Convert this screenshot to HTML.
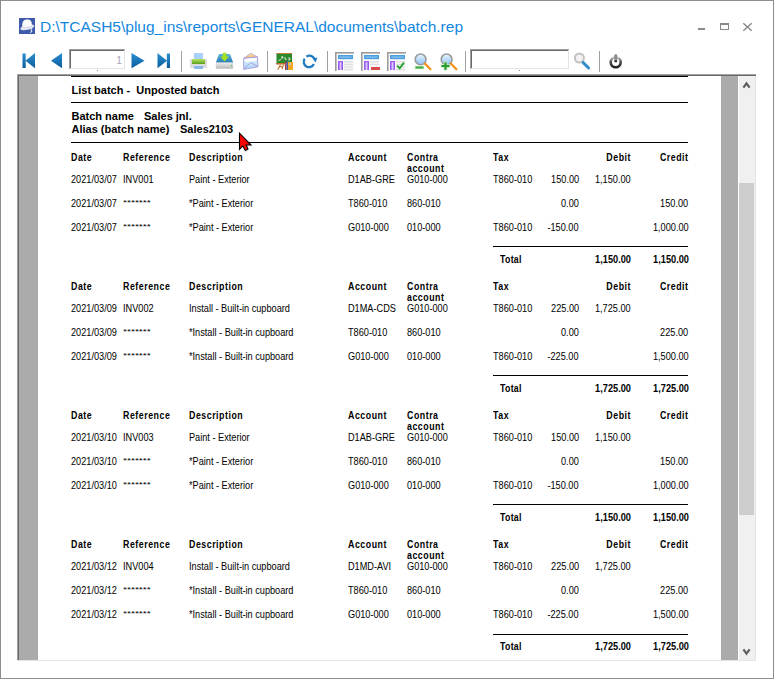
<!DOCTYPE html>
<html><head><meta charset="utf-8">
<style>
html,body{margin:0;padding:0;}
body{width:774px;height:679px;position:relative;overflow:hidden;background:#fff;font-family:"Liberation Sans",sans-serif;}
.t{position:absolute;white-space:pre;}
.hl{position:absolute;background:#000;}
.abs{position:absolute;}
</style></head><body>
<div class="abs" style="left:0;top:0;width:772px;height:677px;border:1px solid #8e8e8e;"></div>
<!-- title icon -->
<svg class="abs" style="left:19px;top:18px" width="16" height="16" viewBox="0 0 16 16">
<rect x="0" y="0" width="16" height="16" fill="#3d5aab"/>
<ellipse cx="8.3" cy="9.4" rx="7.2" ry="2.5" transform="rotate(-13 8.3 9.4)" fill="#e6e8f2"/>
<path d="M3.2 8.6 C3 3.2 5 1.4 8.2 1.4 C11.6 1.4 13 3.2 12.9 7.6 C10 9 6 9.4 3.2 8.6 Z" fill="#fbfbfd"/>
<path d="M4 9.6 C7 10.2 11 9.6 14.5 7.8" fill="none" stroke="#c9cde0" stroke-width="0.6"/>
<path d="M13.2 10.3 C12.2 10.5 11.6 11.3 12.3 12 C13 12.6 13.2 13.4 11.2 14.6" fill="none" stroke="#dfe3f0" stroke-width="1.1"/>
</svg>
<div class="t" style="left:40px;top:17.5px;font-size:15.5px;line-height:18px;color:#1387de;">D:\TCASH5\plug_ins\reports\GENERAL\documents\batch.rep</div>
<!-- window controls -->
<div class="abs" style="left:698px;top:28px;width:7px;height:2px;background:#8a8a8a"></div>
<div class="abs" style="left:720px;top:23px;width:7px;height:4px;border:1px solid #8a8a8a;border-top-width:2px"></div>
<svg class="abs" style="left:742px;top:22px" width="11" height="10" viewBox="0 0 11 10"><path d="M1.3 1.3 L9.7 8.7 M9.7 1.3 L1.3 8.7" stroke="#8a8a8a" stroke-width="1.5"/></svg>
<!-- toolbar -->
<svg class="abs" style="left:0;top:44px" width="774" height="30" viewBox="0 44 774 30">
<defs>
<linearGradient id="nb" x1="0" y1="0" x2="0" y2="1"><stop offset="0" stop-color="#2a8fd0"/><stop offset="1" stop-color="#0a5c9c"/></linearGradient>
<linearGradient id="gr" x1="0" y1="0" x2="0" y2="1"><stop offset="0" stop-color="#b8e860"/><stop offset="1" stop-color="#5a9e1a"/></linearGradient>
<linearGradient id="lens" x1="0" y1="0" x2="0" y2="1"><stop offset="0" stop-color="#e8f4ff"/><stop offset="1" stop-color="#8ec2f0"/></linearGradient>
</defs>
<!-- first -->
<path d="M22.5 53.5 h3.2 v14.5 h-3.2z" fill="url(#nb)"/>
<path d="M25.5 60.7 L35 53 V68.3 Z" fill="url(#nb)"/>
<!-- prev -->
<path d="M51 60.7 L62 53 V68.3 Z" fill="url(#nb)"/>
<!-- next -->
<path d="M144.5 60.7 L131.5 53 V68.3 Z" fill="url(#nb)"/>
<!-- last -->
<path d="M167 60.7 L157.5 53 V68.3 Z" fill="url(#nb)"/>
<path d="M166.8 53.5 h3.2 v14.5 h-3.2z" fill="url(#nb)"/>
<!-- separators -->
<rect x="181" y="51" width="1" height="21" fill="#a0a0a0"/>
<rect x="267" y="51" width="1" height="21" fill="#a0a0a0"/>
<rect x="327" y="51" width="1" height="21" fill="#a0a0a0"/>
<rect x="465" y="51" width="1" height="21" fill="#a0a0a0"/>
<rect x="599" y="51" width="1" height="21" fill="#a0a0a0"/>
<!-- printer -->
<rect x="190" y="59" width="17" height="9" rx="1" fill="#dcdcdc"/>
<rect x="194" y="53" width="9" height="7" fill="#a8d0f8"/>
<rect x="192" y="59" width="13" height="5" fill="url(#gr)"/>
<rect x="194" y="66" width="9" height="3" fill="#8ab8ea"/>
<!-- tray -->
<linearGradient id="trb" x1="0" y1="0" x2="0" y2="1"><stop offset="0" stop-color="#5ab4e0"/><stop offset="1" stop-color="#2a7aae"/></linearGradient>
<linearGradient id="trg" x1="0" y1="0" x2="0" y2="1"><stop offset="0" stop-color="#ececec"/><stop offset="1" stop-color="#b8b8b8"/></linearGradient>
<path d="M219.5 54 H229 Q230 54 230.4 55 L233.2 62.8 H215.8 L218.6 55 Q219 54 219.5 54 Z" fill="url(#trb)"/>
<rect x="215.8" y="62.6" width="17.4" height="6.2" rx="1" fill="url(#trg)"/>
<rect x="231" y="65" width="1" height="1" fill="#40c040"/>
<path d="M222.8 52.8 h3.6 v3.8 h2.6 l-4.4 4.8 l-4.4 -4.8 h2.6z" fill="#a4e21c"/>
<!-- envelope -->
<linearGradient id="evb" x1="0" y1="0" x2="0" y2="1"><stop offset="0" stop-color="#e8f6ff"/><stop offset="1" stop-color="#a8d4f4"/></linearGradient>
<linearGradient id="evy" x1="0" y1="0" x2="0" y2="1"><stop offset="0" stop-color="#fbe9a8"/><stop offset="1" stop-color="#f0b060"/></linearGradient>
<path d="M243.5 58.5 L250.8 53.3 L257.5 57 Z" fill="url(#evy)" stroke="#b0a0e0" stroke-width="0.8"/>
<path d="M243.5 58.5 L257.5 57 L258 66.8 L243.8 69.4 Z" fill="url(#evb)" stroke="#a898e0" stroke-width="0.9"/>
<path d="M244.5 59 L256.8 57.8 L256.4 60.8 L245.2 62.2 Z" fill="#ffffff"/>
<path d="M243.8 69.2 L250.6 62.6 L257.8 66.6" fill="none" stroke="#a898e0" stroke-width="0.9"/>
<!-- chalkboard -->
<rect x="276.5" y="53" width="15.5" height="10" fill="#2c8a2e"/>
<rect x="276.5" y="53" width="15.5" height="0.9" fill="#d08030"/>
<path d="M278.5 60.5 l2.5 -1 M281.8 58.8 v-2.2 h1 v1.8 M285 57.2 v2 h1.6 M288.3 58 h1.5 v2 h-1.5" fill="none" stroke="#f0f0f0" stroke-width="0.9"/>
<rect x="276" y="63" width="10" height="1.5" fill="#b8702a"/>
<path d="M280.5 64.5 L277.8 69.8 M279 66.8 H283.5 M283.5 64.5 L282 69" stroke="#b8702a" stroke-width="1.1"/>
<rect x="285" y="61.5" width="1.6" height="8.5" fill="#a03840"/>
<rect x="286.6" y="61" width="1.4" height="9" fill="#4060a8"/>
<rect x="288" y="62" width="5" height="8" fill="#f2a820"/>
<rect x="289" y="63" width="2" height="2" fill="#b0c8e0"/>
<!-- refresh -->
<path d="M304.70 58.76 A5.3 5.3 0 1 0 313.84 64.04" fill="none" stroke="#1e7cc0" stroke-width="2.3"/>
<path d="M306.46 56.66 A5.3 5.3 0 0 1 314.48 59.19" fill="none" stroke="#1e7cc0" stroke-width="2.3"/>
<path d="M312.5 58.6 L317.4 57.6 L315.6 62.4 Z" fill="#1e7cc0"/>
<!-- page icons -->
<rect x="335" y="52" width="19" height="19" fill="#fcfcfc"/>
<rect x="335" y="52" width="19" height="1.6" fill="#9c9c9c"/>
<rect x="335" y="52" width="1.6" height="19" fill="#9c9c9c"/>
<rect x="338" y="55" width="15" height="4.2" fill="#4a9fdc"/>
<rect x="339.5" y="56.5" width="12" height="1.2" fill="#90c4ee"/>
<rect x="338" y="61" width="5" height="9" fill="#9a5cf0"/>
<rect x="339.6" y="62.2" width="1.8" height="7.8" fill="#dccaff"/>
<rect x="344" y="61" width="9" height="1.6" fill="#e0e0e0"/>
<rect x="344" y="63.6" width="9" height="1.6" fill="#e0e0e0"/>
<rect x="344" y="66.2" width="9" height="1.6" fill="#e0e0e0"/>
<rect x="344" y="68.8" width="9" height="1.6" fill="#e0e0e0"/>
<rect x="361" y="52" width="19" height="19" fill="#fcfcfc"/>
<rect x="361" y="52" width="19" height="1.6" fill="#9c9c9c"/>
<rect x="361" y="52" width="1.6" height="19" fill="#9c9c9c"/>
<rect x="364" y="55" width="15" height="4.2" fill="#4a9fdc"/>
<rect x="365.5" y="56.5" width="12" height="1.2" fill="#90c4ee"/>
<rect x="364" y="61" width="5" height="9" fill="#9a5cf0"/>
<rect x="365.6" y="62.2" width="1.8" height="7.8" fill="#dccaff"/>
<rect x="370" y="61" width="9" height="1.6" fill="#e0e0e0"/>
<rect x="370" y="63.6" width="9" height="1.6" fill="#e0e0e0"/>
<rect x="371" y="67" width="9" height="3" fill="#d84a4a"/>
<rect x="387" y="52" width="19" height="19" fill="#fcfcfc"/>
<rect x="387" y="52" width="19" height="1.6" fill="#9c9c9c"/>
<rect x="387" y="52" width="1.6" height="19" fill="#9c9c9c"/>
<rect x="390" y="55" width="15" height="4.2" fill="#4a9fdc"/>
<rect x="391.5" y="56.5" width="12" height="1.2" fill="#90c4ee"/>
<rect x="390" y="61" width="5" height="9" fill="#9a5cf0"/>
<rect x="391.6" y="62.2" width="1.8" height="7.8" fill="#dccaff"/>
<rect x="396" y="61" width="9" height="1.6" fill="#e0e0e0"/>
<rect x="396" y="63.6" width="9" height="1.6" fill="#e0e0e0"/>
<rect x="396" y="66.2" width="9" height="1.6" fill="#e0e0e0"/>
<rect x="396" y="68.8" width="9" height="1.6" fill="#e0e0e0"/>
<path d="M397.2 65.6 L399.6 68.4 L404 62.6" fill="none" stroke="#22a030" stroke-width="1.8"/>
<!-- zoom out -->
<circle cx="420.6" cy="59.4" r="5.4" fill="url(#lens)" stroke="#9a9a9a" stroke-width="1.6"/>
<path d="M425 63.8 L430.4 69.3" stroke="#f0901a" stroke-width="2.3" stroke-linecap="round"/>
<rect x="414.8" y="65.8" width="9.4" height="3.4" fill="#c8ecc8"/>
<rect x="415.5" y="66.5" width="8" height="2" fill="#3ca83c"/>
<!-- zoom in -->
<circle cx="446.6" cy="59.4" r="5.4" fill="url(#lens)" stroke="#9a9a9a" stroke-width="1.6"/>
<path d="M451 63.8 L456.4 69.3" stroke="#f0901a" stroke-width="2.3" stroke-linecap="round"/>
<path d="M440.8 66 h9.4 M445.5 61.6 v8.8" stroke="#c8ecc8" stroke-width="3.6"/>
<path d="M441.5 66 h8 M445.5 62.3 v7.4" stroke="#2a9a2a" stroke-width="2.2"/>
<!-- search boxes -->
<rect x="69" y="49" width="57" height="21" fill="#fff"/>
<rect x="69" y="49" width="56" height="1" fill="#a0a0a0"/><rect x="69" y="49" width="1" height="20" fill="#a0a0a0"/>
<rect x="70" y="50" width="54" height="1" fill="#696969"/><rect x="70" y="50" width="1" height="18" fill="#696969"/>
<rect x="70" y="68" width="55" height="1" fill="#e3e3e3"/><rect x="124" y="50" width="1" height="19" fill="#e3e3e3"/>
<rect x="470" y="49" width="100" height="21" fill="#fff"/>
<rect x="470" y="49" width="99" height="1" fill="#a0a0a0"/><rect x="470" y="49" width="1" height="20" fill="#a0a0a0"/>
<rect x="471" y="50" width="97" height="1" fill="#696969"/><rect x="471" y="50" width="1" height="18" fill="#696969"/>
<rect x="471" y="68" width="98" height="1" fill="#e3e3e3"/><rect x="568" y="50" width="1" height="19" fill="#e3e3e3"/>
<rect x="97" y="70" width="1" height="1" fill="#808080"/>
<rect x="519" y="70" width="1" height="1" fill="#808080"/>
<!-- find -->
<circle cx="579.4" cy="58" r="4.5" fill="#f2f2f2" stroke="#c2c2c2" stroke-width="2"/>
<path d="M583.2 62.6 L588.6 68" stroke="#2f8ec8" stroke-width="3" stroke-linecap="round"/>
<!-- power -->
<linearGradient id="pw" x1="0" y1="0" x2="0" y2="1"><stop offset="0" stop-color="#c8c8c8"/><stop offset="0.45" stop-color="#505050"/><stop offset="1" stop-color="#202020"/></linearGradient>
<circle cx="615.7" cy="62.3" r="5" fill="none" stroke="url(#pw)" stroke-width="2.6"/>
<rect x="614.3" y="54.2" width="2.9" height="8" rx="1.2" fill="#8a8a8a"/>
<rect x="614.5" y="60.5" width="2.5" height="1.6" fill="#202020"/>
</svg>
<div class="t" style="right:652px;top:53.5px;font-size:10.5px;line-height:12px;color:#a8a8b8;">1</div>

<div class="abs" style="left:17px;top:74px;width:739px;height:587px;background:#fff;overflow:hidden;">
  <div class="abs" style="left:0;top:0;width:739px;height:1px;background:#a0a0a0"></div>
  <div class="abs" style="left:1px;top:1px;width:738px;height:1px;background:#696969"></div>
  <div class="abs" style="left:0;top:0;width:1px;height:587px;background:#a0a0a0"></div>
  <div class="abs" style="left:1px;top:1px;width:1px;height:586px;background:#696969"></div>
  <div class="abs" style="left:2px;top:2px;width:19px;height:584px;background:#ababab"></div>
  <div class="abs" style="left:704px;top:2px;width:17px;height:584px;background:#ababab"></div>
  <div class="abs" style="left:0;top:586px;width:739px;height:1px;background:#e3e3e3"></div>
</div>
<div class="abs" style="left:0;top:0;width:774px;height:679px;">
<div class="hl" style="left:71px;top:76px;width:617px;height:1px"></div><div class="t" style="left:71.5px;top:84.68px;font-size:11px;line-height:11px;font-weight:bold;color:#000;">List batch -  Unposted batch</div>
<div class="hl" style="left:71px;top:102px;width:617px;height:1px"></div><div class="t" style="left:71.5px;top:110.68px;font-size:11px;line-height:11px;font-weight:bold;color:#000;">Batch name</div>
<div class="t" style="left:144px;top:110.68px;font-size:11px;line-height:11px;font-weight:bold;color:#000;">Sales jnl.</div>
<div class="t" style="left:71.5px;top:123.68px;font-size:11px;line-height:11px;font-weight:bold;color:#000;">Alias (batch name)</div>
<div class="t" style="left:180px;top:123.68px;font-size:11px;line-height:11px;font-weight:bold;color:#000;">Sales2103</div>
<div class="hl" style="left:71px;top:142px;width:617px;height:1px"></div><div class="t" style="left:71px;top:153.03px;font-size:10px;line-height:10px;font-weight:bold;color:#000;letter-spacing:0.6px;transform:scale(0.88,1.0);transform-origin:left 6.97px;">Date</div>
<div class="t" style="left:123px;top:153.03px;font-size:10px;line-height:10px;font-weight:bold;color:#000;letter-spacing:0.6px;transform:scale(0.88,1.0);transform-origin:left 6.97px;">Reference</div>
<div class="t" style="left:188.5px;top:153.03px;font-size:10px;line-height:10px;font-weight:bold;color:#000;letter-spacing:0.6px;transform:scale(0.88,1.0);transform-origin:left 6.97px;">Description</div>
<div class="t" style="left:347.5px;top:153.03px;font-size:10px;line-height:10px;font-weight:bold;color:#000;letter-spacing:0.6px;transform:scale(0.88,1.0);transform-origin:left 6.97px;">Account</div>
<div class="t" style="left:406.5px;top:153.03px;font-size:10px;line-height:10px;font-weight:bold;color:#000;letter-spacing:0.6px;transform:scale(0.88,1.0);transform-origin:left 6.97px;">Contra</div>
<div class="t" style="left:406.5px;top:163.53px;font-size:10px;line-height:10px;font-weight:bold;color:#000;letter-spacing:0.6px;transform:scale(0.88,1.0);transform-origin:left 6.97px;">account</div>
<div class="t" style="left:492.5px;top:153.03px;font-size:10px;line-height:10px;font-weight:bold;color:#000;letter-spacing:0.6px;transform:scale(0.88,1.0);transform-origin:left 6.97px;">Tax</div>
<div class="t" style="right:143px;top:153.03px;font-size:10px;line-height:10px;font-weight:bold;color:#000;letter-spacing:0.6px;transform:scale(0.88,1.0);transform-origin:right 6.97px;">Debit</div>
<div class="t" style="right:85.5px;top:153.03px;font-size:10px;line-height:10px;font-weight:bold;color:#000;letter-spacing:0.6px;transform:scale(0.88,1.0);transform-origin:right 6.97px;">Credit</div>
<div class="t" style="left:71px;top:175.36px;font-size:10.2px;line-height:10.2px;color:#000;transform:scale(0.9,1.0);transform-origin:left 7.64px;">2021/03/07</div>
<div class="t" style="left:123px;top:175.36px;font-size:10.2px;line-height:10.2px;color:#000;transform:scale(0.9,1.0);transform-origin:left 7.64px;">INV001</div>
<div class="t" style="left:188.5px;top:175.36px;font-size:10.2px;line-height:10.2px;color:#000;transform:scale(0.9,1.0);transform-origin:left 7.64px;">Paint - Exterior</div>
<div class="t" style="left:347.5px;top:175.36px;font-size:10.2px;line-height:10.2px;color:#000;transform:scale(0.9,1.0);transform-origin:left 7.64px;">D1AB-GRE</div>
<div class="t" style="left:406.5px;top:175.36px;font-size:10.2px;line-height:10.2px;color:#000;transform:scale(0.9,1.0);transform-origin:left 7.64px;">G010-000</div>
<div class="t" style="left:492.5px;top:175.36px;font-size:10.2px;line-height:10.2px;color:#000;transform:scale(0.9,1.0);transform-origin:left 7.64px;">T860-010</div>
<div class="t" style="right:195px;top:175.36px;font-size:10.2px;line-height:10.2px;color:#000;transform:scale(0.9,1.0);transform-origin:right 7.64px;">150.00</div>
<div class="t" style="right:143px;top:175.36px;font-size:10.2px;line-height:10.2px;color:#000;transform:scale(0.9,1.0);transform-origin:right 7.64px;">1,150.00</div>
<div class="t" style="left:71px;top:199.36px;font-size:10.2px;line-height:10.2px;color:#000;transform:scale(0.9,1.0);transform-origin:left 7.64px;">2021/03/07</div>
<div class="t" style="left:123px;top:196.76px;font-size:10.2px;line-height:10.2px;color:#000;transform:scale(1.0,0.72);transform-origin:left 7.64px;">*******</div>
<div class="t" style="left:188.5px;top:199.36px;font-size:10.2px;line-height:10.2px;color:#000;transform:scale(0.9,1.0);transform-origin:left 7.64px;">*Paint - Exterior</div>
<div class="t" style="left:347.5px;top:199.36px;font-size:10.2px;line-height:10.2px;color:#000;transform:scale(0.9,1.0);transform-origin:left 7.64px;">T860-010</div>
<div class="t" style="left:406.5px;top:199.36px;font-size:10.2px;line-height:10.2px;color:#000;transform:scale(0.9,1.0);transform-origin:left 7.64px;">860-010</div>
<div class="t" style="right:195px;top:199.36px;font-size:10.2px;line-height:10.2px;color:#000;transform:scale(0.9,1.0);transform-origin:right 7.64px;">0.00</div>
<div class="t" style="right:85.5px;top:199.36px;font-size:10.2px;line-height:10.2px;color:#000;transform:scale(0.9,1.0);transform-origin:right 7.64px;">150.00</div>
<div class="t" style="left:71px;top:223.36px;font-size:10.2px;line-height:10.2px;color:#000;transform:scale(0.9,1.0);transform-origin:left 7.64px;">2021/03/07</div>
<div class="t" style="left:123px;top:220.76px;font-size:10.2px;line-height:10.2px;color:#000;transform:scale(1.0,0.72);transform-origin:left 7.64px;">*******</div>
<div class="t" style="left:188.5px;top:223.36px;font-size:10.2px;line-height:10.2px;color:#000;transform:scale(0.9,1.0);transform-origin:left 7.64px;">*Paint - Exterior</div>
<div class="t" style="left:347.5px;top:223.36px;font-size:10.2px;line-height:10.2px;color:#000;transform:scale(0.9,1.0);transform-origin:left 7.64px;">G010-000</div>
<div class="t" style="left:406.5px;top:223.36px;font-size:10.2px;line-height:10.2px;color:#000;transform:scale(0.9,1.0);transform-origin:left 7.64px;">010-000</div>
<div class="t" style="left:492.5px;top:223.36px;font-size:10.2px;line-height:10.2px;color:#000;transform:scale(0.9,1.0);transform-origin:left 7.64px;">T860-010</div>
<div class="t" style="right:195px;top:223.36px;font-size:10.2px;line-height:10.2px;color:#000;transform:scale(0.9,1.0);transform-origin:right 7.64px;">-150.00</div>
<div class="t" style="right:85.5px;top:223.36px;font-size:10.2px;line-height:10.2px;color:#000;transform:scale(0.9,1.0);transform-origin:right 7.64px;">1,000.00</div>
<div class="hl" style="left:493px;top:246px;width:195px;height:1px"></div><div class="t" style="left:499.5px;top:255.03px;font-size:10px;line-height:10px;font-weight:bold;color:#000;letter-spacing:0.3px;transform:scale(0.88,1.0);transform-origin:left 6.97px;">Total</div>
<div class="t" style="right:143px;top:255.03px;font-size:10px;line-height:10px;font-weight:bold;color:#000;transform:scale(0.92,1.0);transform-origin:right 6.97px;">1,150.00</div>
<div class="t" style="right:85.5px;top:255.03px;font-size:10px;line-height:10px;font-weight:bold;color:#000;transform:scale(0.92,1.0);transform-origin:right 6.97px;">1,150.00</div>
<div class="t" style="left:71px;top:282.03px;font-size:10px;line-height:10px;font-weight:bold;color:#000;letter-spacing:0.6px;transform:scale(0.88,1.0);transform-origin:left 6.97px;">Date</div>
<div class="t" style="left:123px;top:282.03px;font-size:10px;line-height:10px;font-weight:bold;color:#000;letter-spacing:0.6px;transform:scale(0.88,1.0);transform-origin:left 6.97px;">Reference</div>
<div class="t" style="left:188.5px;top:282.03px;font-size:10px;line-height:10px;font-weight:bold;color:#000;letter-spacing:0.6px;transform:scale(0.88,1.0);transform-origin:left 6.97px;">Description</div>
<div class="t" style="left:347.5px;top:282.03px;font-size:10px;line-height:10px;font-weight:bold;color:#000;letter-spacing:0.6px;transform:scale(0.88,1.0);transform-origin:left 6.97px;">Account</div>
<div class="t" style="left:406.5px;top:282.03px;font-size:10px;line-height:10px;font-weight:bold;color:#000;letter-spacing:0.6px;transform:scale(0.88,1.0);transform-origin:left 6.97px;">Contra</div>
<div class="t" style="left:406.5px;top:292.53px;font-size:10px;line-height:10px;font-weight:bold;color:#000;letter-spacing:0.6px;transform:scale(0.88,1.0);transform-origin:left 6.97px;">account</div>
<div class="t" style="left:492.5px;top:282.03px;font-size:10px;line-height:10px;font-weight:bold;color:#000;letter-spacing:0.6px;transform:scale(0.88,1.0);transform-origin:left 6.97px;">Tax</div>
<div class="t" style="right:143px;top:282.03px;font-size:10px;line-height:10px;font-weight:bold;color:#000;letter-spacing:0.6px;transform:scale(0.88,1.0);transform-origin:right 6.97px;">Debit</div>
<div class="t" style="right:85.5px;top:282.03px;font-size:10px;line-height:10px;font-weight:bold;color:#000;letter-spacing:0.6px;transform:scale(0.88,1.0);transform-origin:right 6.97px;">Credit</div>
<div class="t" style="left:71px;top:304.36px;font-size:10.2px;line-height:10.2px;color:#000;transform:scale(0.9,1.0);transform-origin:left 7.64px;">2021/03/09</div>
<div class="t" style="left:123px;top:304.36px;font-size:10.2px;line-height:10.2px;color:#000;transform:scale(0.9,1.0);transform-origin:left 7.64px;">INV002</div>
<div class="t" style="left:188.5px;top:304.36px;font-size:10.2px;line-height:10.2px;color:#000;transform:scale(0.9,1.0);transform-origin:left 7.64px;">Install - Built-in cupboard</div>
<div class="t" style="left:347.5px;top:304.36px;font-size:10.2px;line-height:10.2px;color:#000;transform:scale(0.9,1.0);transform-origin:left 7.64px;">D1MA-CDS</div>
<div class="t" style="left:406.5px;top:304.36px;font-size:10.2px;line-height:10.2px;color:#000;transform:scale(0.9,1.0);transform-origin:left 7.64px;">G010-000</div>
<div class="t" style="left:492.5px;top:304.36px;font-size:10.2px;line-height:10.2px;color:#000;transform:scale(0.9,1.0);transform-origin:left 7.64px;">T860-010</div>
<div class="t" style="right:195px;top:304.36px;font-size:10.2px;line-height:10.2px;color:#000;transform:scale(0.9,1.0);transform-origin:right 7.64px;">225.00</div>
<div class="t" style="right:143px;top:304.36px;font-size:10.2px;line-height:10.2px;color:#000;transform:scale(0.9,1.0);transform-origin:right 7.64px;">1,725.00</div>
<div class="t" style="left:71px;top:328.36px;font-size:10.2px;line-height:10.2px;color:#000;transform:scale(0.9,1.0);transform-origin:left 7.64px;">2021/03/09</div>
<div class="t" style="left:123px;top:325.76px;font-size:10.2px;line-height:10.2px;color:#000;transform:scale(1.0,0.72);transform-origin:left 7.64px;">*******</div>
<div class="t" style="left:188.5px;top:328.36px;font-size:10.2px;line-height:10.2px;color:#000;transform:scale(0.9,1.0);transform-origin:left 7.64px;">*Install - Built-in cupboard</div>
<div class="t" style="left:347.5px;top:328.36px;font-size:10.2px;line-height:10.2px;color:#000;transform:scale(0.9,1.0);transform-origin:left 7.64px;">T860-010</div>
<div class="t" style="left:406.5px;top:328.36px;font-size:10.2px;line-height:10.2px;color:#000;transform:scale(0.9,1.0);transform-origin:left 7.64px;">860-010</div>
<div class="t" style="right:195px;top:328.36px;font-size:10.2px;line-height:10.2px;color:#000;transform:scale(0.9,1.0);transform-origin:right 7.64px;">0.00</div>
<div class="t" style="right:85.5px;top:328.36px;font-size:10.2px;line-height:10.2px;color:#000;transform:scale(0.9,1.0);transform-origin:right 7.64px;">225.00</div>
<div class="t" style="left:71px;top:352.36px;font-size:10.2px;line-height:10.2px;color:#000;transform:scale(0.9,1.0);transform-origin:left 7.64px;">2021/03/09</div>
<div class="t" style="left:123px;top:349.76px;font-size:10.2px;line-height:10.2px;color:#000;transform:scale(1.0,0.72);transform-origin:left 7.64px;">*******</div>
<div class="t" style="left:188.5px;top:352.36px;font-size:10.2px;line-height:10.2px;color:#000;transform:scale(0.9,1.0);transform-origin:left 7.64px;">*Install - Built-in cupboard</div>
<div class="t" style="left:347.5px;top:352.36px;font-size:10.2px;line-height:10.2px;color:#000;transform:scale(0.9,1.0);transform-origin:left 7.64px;">G010-000</div>
<div class="t" style="left:406.5px;top:352.36px;font-size:10.2px;line-height:10.2px;color:#000;transform:scale(0.9,1.0);transform-origin:left 7.64px;">010-000</div>
<div class="t" style="left:492.5px;top:352.36px;font-size:10.2px;line-height:10.2px;color:#000;transform:scale(0.9,1.0);transform-origin:left 7.64px;">T860-010</div>
<div class="t" style="right:195px;top:352.36px;font-size:10.2px;line-height:10.2px;color:#000;transform:scale(0.9,1.0);transform-origin:right 7.64px;">-225.00</div>
<div class="t" style="right:85.5px;top:352.36px;font-size:10.2px;line-height:10.2px;color:#000;transform:scale(0.9,1.0);transform-origin:right 7.64px;">1,500.00</div>
<div class="hl" style="left:493px;top:375px;width:195px;height:1px"></div><div class="t" style="left:499.5px;top:384.03px;font-size:10px;line-height:10px;font-weight:bold;color:#000;letter-spacing:0.3px;transform:scale(0.88,1.0);transform-origin:left 6.97px;">Total</div>
<div class="t" style="right:143px;top:384.03px;font-size:10px;line-height:10px;font-weight:bold;color:#000;transform:scale(0.92,1.0);transform-origin:right 6.97px;">1,725.00</div>
<div class="t" style="right:85.5px;top:384.03px;font-size:10px;line-height:10px;font-weight:bold;color:#000;transform:scale(0.92,1.0);transform-origin:right 6.97px;">1,725.00</div>
<div class="t" style="left:71px;top:411.03px;font-size:10px;line-height:10px;font-weight:bold;color:#000;letter-spacing:0.6px;transform:scale(0.88,1.0);transform-origin:left 6.97px;">Date</div>
<div class="t" style="left:123px;top:411.03px;font-size:10px;line-height:10px;font-weight:bold;color:#000;letter-spacing:0.6px;transform:scale(0.88,1.0);transform-origin:left 6.97px;">Reference</div>
<div class="t" style="left:188.5px;top:411.03px;font-size:10px;line-height:10px;font-weight:bold;color:#000;letter-spacing:0.6px;transform:scale(0.88,1.0);transform-origin:left 6.97px;">Description</div>
<div class="t" style="left:347.5px;top:411.03px;font-size:10px;line-height:10px;font-weight:bold;color:#000;letter-spacing:0.6px;transform:scale(0.88,1.0);transform-origin:left 6.97px;">Account</div>
<div class="t" style="left:406.5px;top:411.03px;font-size:10px;line-height:10px;font-weight:bold;color:#000;letter-spacing:0.6px;transform:scale(0.88,1.0);transform-origin:left 6.97px;">Contra</div>
<div class="t" style="left:406.5px;top:421.53px;font-size:10px;line-height:10px;font-weight:bold;color:#000;letter-spacing:0.6px;transform:scale(0.88,1.0);transform-origin:left 6.97px;">account</div>
<div class="t" style="left:492.5px;top:411.03px;font-size:10px;line-height:10px;font-weight:bold;color:#000;letter-spacing:0.6px;transform:scale(0.88,1.0);transform-origin:left 6.97px;">Tax</div>
<div class="t" style="right:143px;top:411.03px;font-size:10px;line-height:10px;font-weight:bold;color:#000;letter-spacing:0.6px;transform:scale(0.88,1.0);transform-origin:right 6.97px;">Debit</div>
<div class="t" style="right:85.5px;top:411.03px;font-size:10px;line-height:10px;font-weight:bold;color:#000;letter-spacing:0.6px;transform:scale(0.88,1.0);transform-origin:right 6.97px;">Credit</div>
<div class="t" style="left:71px;top:433.36px;font-size:10.2px;line-height:10.2px;color:#000;transform:scale(0.9,1.0);transform-origin:left 7.64px;">2021/03/10</div>
<div class="t" style="left:123px;top:433.36px;font-size:10.2px;line-height:10.2px;color:#000;transform:scale(0.9,1.0);transform-origin:left 7.64px;">INV003</div>
<div class="t" style="left:188.5px;top:433.36px;font-size:10.2px;line-height:10.2px;color:#000;transform:scale(0.9,1.0);transform-origin:left 7.64px;">Paint - Exterior</div>
<div class="t" style="left:347.5px;top:433.36px;font-size:10.2px;line-height:10.2px;color:#000;transform:scale(0.9,1.0);transform-origin:left 7.64px;">D1AB-GRE</div>
<div class="t" style="left:406.5px;top:433.36px;font-size:10.2px;line-height:10.2px;color:#000;transform:scale(0.9,1.0);transform-origin:left 7.64px;">G010-000</div>
<div class="t" style="left:492.5px;top:433.36px;font-size:10.2px;line-height:10.2px;color:#000;transform:scale(0.9,1.0);transform-origin:left 7.64px;">T860-010</div>
<div class="t" style="right:195px;top:433.36px;font-size:10.2px;line-height:10.2px;color:#000;transform:scale(0.9,1.0);transform-origin:right 7.64px;">150.00</div>
<div class="t" style="right:143px;top:433.36px;font-size:10.2px;line-height:10.2px;color:#000;transform:scale(0.9,1.0);transform-origin:right 7.64px;">1,150.00</div>
<div class="t" style="left:71px;top:457.36px;font-size:10.2px;line-height:10.2px;color:#000;transform:scale(0.9,1.0);transform-origin:left 7.64px;">2021/03/10</div>
<div class="t" style="left:123px;top:454.76px;font-size:10.2px;line-height:10.2px;color:#000;transform:scale(1.0,0.72);transform-origin:left 7.64px;">*******</div>
<div class="t" style="left:188.5px;top:457.36px;font-size:10.2px;line-height:10.2px;color:#000;transform:scale(0.9,1.0);transform-origin:left 7.64px;">*Paint - Exterior</div>
<div class="t" style="left:347.5px;top:457.36px;font-size:10.2px;line-height:10.2px;color:#000;transform:scale(0.9,1.0);transform-origin:left 7.64px;">T860-010</div>
<div class="t" style="left:406.5px;top:457.36px;font-size:10.2px;line-height:10.2px;color:#000;transform:scale(0.9,1.0);transform-origin:left 7.64px;">860-010</div>
<div class="t" style="right:195px;top:457.36px;font-size:10.2px;line-height:10.2px;color:#000;transform:scale(0.9,1.0);transform-origin:right 7.64px;">0.00</div>
<div class="t" style="right:85.5px;top:457.36px;font-size:10.2px;line-height:10.2px;color:#000;transform:scale(0.9,1.0);transform-origin:right 7.64px;">150.00</div>
<div class="t" style="left:71px;top:481.36px;font-size:10.2px;line-height:10.2px;color:#000;transform:scale(0.9,1.0);transform-origin:left 7.64px;">2021/03/10</div>
<div class="t" style="left:123px;top:478.76px;font-size:10.2px;line-height:10.2px;color:#000;transform:scale(1.0,0.72);transform-origin:left 7.64px;">*******</div>
<div class="t" style="left:188.5px;top:481.36px;font-size:10.2px;line-height:10.2px;color:#000;transform:scale(0.9,1.0);transform-origin:left 7.64px;">*Paint - Exterior</div>
<div class="t" style="left:347.5px;top:481.36px;font-size:10.2px;line-height:10.2px;color:#000;transform:scale(0.9,1.0);transform-origin:left 7.64px;">G010-000</div>
<div class="t" style="left:406.5px;top:481.36px;font-size:10.2px;line-height:10.2px;color:#000;transform:scale(0.9,1.0);transform-origin:left 7.64px;">010-000</div>
<div class="t" style="left:492.5px;top:481.36px;font-size:10.2px;line-height:10.2px;color:#000;transform:scale(0.9,1.0);transform-origin:left 7.64px;">T860-010</div>
<div class="t" style="right:195px;top:481.36px;font-size:10.2px;line-height:10.2px;color:#000;transform:scale(0.9,1.0);transform-origin:right 7.64px;">-150.00</div>
<div class="t" style="right:85.5px;top:481.36px;font-size:10.2px;line-height:10.2px;color:#000;transform:scale(0.9,1.0);transform-origin:right 7.64px;">1,000.00</div>
<div class="hl" style="left:493px;top:504px;width:195px;height:1px"></div><div class="t" style="left:499.5px;top:513.03px;font-size:10px;line-height:10px;font-weight:bold;color:#000;letter-spacing:0.3px;transform:scale(0.88,1.0);transform-origin:left 6.97px;">Total</div>
<div class="t" style="right:143px;top:513.03px;font-size:10px;line-height:10px;font-weight:bold;color:#000;transform:scale(0.92,1.0);transform-origin:right 6.97px;">1,150.00</div>
<div class="t" style="right:85.5px;top:513.03px;font-size:10px;line-height:10px;font-weight:bold;color:#000;transform:scale(0.92,1.0);transform-origin:right 6.97px;">1,150.00</div>
<div class="t" style="left:71px;top:540.03px;font-size:10px;line-height:10px;font-weight:bold;color:#000;letter-spacing:0.6px;transform:scale(0.88,1.0);transform-origin:left 6.97px;">Date</div>
<div class="t" style="left:123px;top:540.03px;font-size:10px;line-height:10px;font-weight:bold;color:#000;letter-spacing:0.6px;transform:scale(0.88,1.0);transform-origin:left 6.97px;">Reference</div>
<div class="t" style="left:188.5px;top:540.03px;font-size:10px;line-height:10px;font-weight:bold;color:#000;letter-spacing:0.6px;transform:scale(0.88,1.0);transform-origin:left 6.97px;">Description</div>
<div class="t" style="left:347.5px;top:540.03px;font-size:10px;line-height:10px;font-weight:bold;color:#000;letter-spacing:0.6px;transform:scale(0.88,1.0);transform-origin:left 6.97px;">Account</div>
<div class="t" style="left:406.5px;top:540.03px;font-size:10px;line-height:10px;font-weight:bold;color:#000;letter-spacing:0.6px;transform:scale(0.88,1.0);transform-origin:left 6.97px;">Contra</div>
<div class="t" style="left:406.5px;top:550.53px;font-size:10px;line-height:10px;font-weight:bold;color:#000;letter-spacing:0.6px;transform:scale(0.88,1.0);transform-origin:left 6.97px;">account</div>
<div class="t" style="left:492.5px;top:540.03px;font-size:10px;line-height:10px;font-weight:bold;color:#000;letter-spacing:0.6px;transform:scale(0.88,1.0);transform-origin:left 6.97px;">Tax</div>
<div class="t" style="right:143px;top:540.03px;font-size:10px;line-height:10px;font-weight:bold;color:#000;letter-spacing:0.6px;transform:scale(0.88,1.0);transform-origin:right 6.97px;">Debit</div>
<div class="t" style="right:85.5px;top:540.03px;font-size:10px;line-height:10px;font-weight:bold;color:#000;letter-spacing:0.6px;transform:scale(0.88,1.0);transform-origin:right 6.97px;">Credit</div>
<div class="t" style="left:71px;top:562.36px;font-size:10.2px;line-height:10.2px;color:#000;transform:scale(0.9,1.0);transform-origin:left 7.64px;">2021/03/12</div>
<div class="t" style="left:123px;top:562.36px;font-size:10.2px;line-height:10.2px;color:#000;transform:scale(0.9,1.0);transform-origin:left 7.64px;">INV004</div>
<div class="t" style="left:188.5px;top:562.36px;font-size:10.2px;line-height:10.2px;color:#000;transform:scale(0.9,1.0);transform-origin:left 7.64px;">Install - Built-in cupboard</div>
<div class="t" style="left:347.5px;top:562.36px;font-size:10.2px;line-height:10.2px;color:#000;transform:scale(0.9,1.0);transform-origin:left 7.64px;">D1MD-AVI</div>
<div class="t" style="left:406.5px;top:562.36px;font-size:10.2px;line-height:10.2px;color:#000;transform:scale(0.9,1.0);transform-origin:left 7.64px;">G010-000</div>
<div class="t" style="left:492.5px;top:562.36px;font-size:10.2px;line-height:10.2px;color:#000;transform:scale(0.9,1.0);transform-origin:left 7.64px;">T860-010</div>
<div class="t" style="right:195px;top:562.36px;font-size:10.2px;line-height:10.2px;color:#000;transform:scale(0.9,1.0);transform-origin:right 7.64px;">225.00</div>
<div class="t" style="right:143px;top:562.36px;font-size:10.2px;line-height:10.2px;color:#000;transform:scale(0.9,1.0);transform-origin:right 7.64px;">1,725.00</div>
<div class="t" style="left:71px;top:586.36px;font-size:10.2px;line-height:10.2px;color:#000;transform:scale(0.9,1.0);transform-origin:left 7.64px;">2021/03/12</div>
<div class="t" style="left:123px;top:583.76px;font-size:10.2px;line-height:10.2px;color:#000;transform:scale(1.0,0.72);transform-origin:left 7.64px;">*******</div>
<div class="t" style="left:188.5px;top:586.36px;font-size:10.2px;line-height:10.2px;color:#000;transform:scale(0.9,1.0);transform-origin:left 7.64px;">*Install - Built-in cupboard</div>
<div class="t" style="left:347.5px;top:586.36px;font-size:10.2px;line-height:10.2px;color:#000;transform:scale(0.9,1.0);transform-origin:left 7.64px;">T860-010</div>
<div class="t" style="left:406.5px;top:586.36px;font-size:10.2px;line-height:10.2px;color:#000;transform:scale(0.9,1.0);transform-origin:left 7.64px;">860-010</div>
<div class="t" style="right:195px;top:586.36px;font-size:10.2px;line-height:10.2px;color:#000;transform:scale(0.9,1.0);transform-origin:right 7.64px;">0.00</div>
<div class="t" style="right:85.5px;top:586.36px;font-size:10.2px;line-height:10.2px;color:#000;transform:scale(0.9,1.0);transform-origin:right 7.64px;">225.00</div>
<div class="t" style="left:71px;top:610.36px;font-size:10.2px;line-height:10.2px;color:#000;transform:scale(0.9,1.0);transform-origin:left 7.64px;">2021/03/12</div>
<div class="t" style="left:123px;top:607.76px;font-size:10.2px;line-height:10.2px;color:#000;transform:scale(1.0,0.72);transform-origin:left 7.64px;">*******</div>
<div class="t" style="left:188.5px;top:610.36px;font-size:10.2px;line-height:10.2px;color:#000;transform:scale(0.9,1.0);transform-origin:left 7.64px;">*Install - Built-in cupboard</div>
<div class="t" style="left:347.5px;top:610.36px;font-size:10.2px;line-height:10.2px;color:#000;transform:scale(0.9,1.0);transform-origin:left 7.64px;">G010-000</div>
<div class="t" style="left:406.5px;top:610.36px;font-size:10.2px;line-height:10.2px;color:#000;transform:scale(0.9,1.0);transform-origin:left 7.64px;">010-000</div>
<div class="t" style="left:492.5px;top:610.36px;font-size:10.2px;line-height:10.2px;color:#000;transform:scale(0.9,1.0);transform-origin:left 7.64px;">T860-010</div>
<div class="t" style="right:195px;top:610.36px;font-size:10.2px;line-height:10.2px;color:#000;transform:scale(0.9,1.0);transform-origin:right 7.64px;">-225.00</div>
<div class="t" style="right:85.5px;top:610.36px;font-size:10.2px;line-height:10.2px;color:#000;transform:scale(0.9,1.0);transform-origin:right 7.64px;">1,500.00</div>
<div class="hl" style="left:493px;top:634px;width:195px;height:1px"></div><div class="t" style="left:499.5px;top:642.03px;font-size:10px;line-height:10px;font-weight:bold;color:#000;letter-spacing:0.3px;transform:scale(0.88,1.0);transform-origin:left 6.97px;">Total</div>
<div class="t" style="right:143px;top:642.03px;font-size:10px;line-height:10px;font-weight:bold;color:#000;transform:scale(0.92,1.0);transform-origin:right 6.97px;">1,725.00</div>
<div class="t" style="right:85.5px;top:642.03px;font-size:10px;line-height:10px;font-weight:bold;color:#000;transform:scale(0.92,1.0);transform-origin:right 6.97px;">1,725.00</div>

</div>
<!-- scrollbar -->
<div class="abs" style="left:739px;top:76px;width:16px;height:584px;background:#f0f0f0;"></div>
<div class="abs" style="left:755px;top:76px;width:1px;height:584px;background:#e3e3e3;"></div>
<div class="abs" style="left:739px;top:183px;width:15px;height:332px;background:#cdcdcd;"></div>
<svg class="abs" style="left:738px;top:76px" width="18" height="18" viewBox="738 76 18 18"><path d="M743.4 87.6 L746.5 83.4 L749.6 87.6" fill="none" stroke="#606060" stroke-width="2.3"/></svg>
<svg class="abs" style="left:738px;top:642px" width="18" height="18" viewBox="738 642 18 18"><path d="M743.4 649.4 L746.5 653.6 L749.6 649.4" fill="none" stroke="#606060" stroke-width="2.3"/></svg>
<!-- cursor -->
<svg class="abs" style="left:238px;top:132px" width="16" height="21" viewBox="0 0 16 21">
<path d="M1.5 1.2 L1.5 17.3 L4.7 13.9 L7.4 18.6 L10 17 L8.2 13 L13 13 Z" fill="#ff0000" stroke="#000" stroke-width="1.1" stroke-linejoin="miter"/>
</svg>

</body></html>
